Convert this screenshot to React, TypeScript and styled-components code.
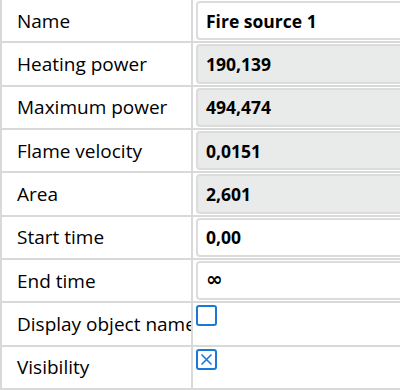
import React from "react";
import styled, { createGlobalStyle } from "styled-components";

const Global = createGlobalStyle`
  html, body { margin: 0; padding: 0; background: #ffffff; }
  body { font-family: "Open Sans", Lato, sans-serif; color: #000; }
`;

const Table = styled.div`
  width: 400px;
  height: 390px;
  box-sizing: border-box;
  border-left: 2px solid #d9d9d9;
  display: grid;
  grid-template-rows: repeat(9, 1fr);
  overflow: hidden;
`;

const Row = styled.div`
  display: grid;
  grid-template-columns: 191px 1fr;
  border-bottom: 2px solid #d9d9d9;
  min-height: 0;
`;

const Label = styled.div`
  border-right: 2px solid #d9d9d9;
  padding-left: 15px;
  display: flex;
  align-items: center;
  font-size: 19px;
  white-space: nowrap;
  overflow: hidden;
`;

const Cell = styled.div`
  padding: 1px 0 1px 3px;
  display: flex;
  min-width: 0;
`;

const Field = styled.div<{ $readOnly?: boolean }>`
  flex: 1;
  margin-right: -12px;
  box-sizing: border-box;
  border: 2px solid #dcdcdc;
  border-radius: 4px;
  background: ${(p) => (p.$readOnly ? "#e9eaea" : "#ffffff")};
  display: flex;
  align-items: center;
  padding-left: 8px;
  font-size: 17.5px;
  font-weight: 700;
`;

const Infinity = styled.span`
  font-family: "DejaVu Sans", sans-serif;
  font-size: 20px;
  font-weight: 700;
  line-height: 1;
  margin-top: -3px;
`;

const Box = styled.div`
  width: 21px;
  height: 21px;
  box-sizing: border-box;
  border: 2px solid #1a78d6;
  border-radius: 3px;
  margin-top: 1px;
  display: flex;
  align-items: center;
  justify-content: center;
`;

type Item =
  | { label: string; kind: "text"; value: string; readOnly?: boolean }
  | { label: string; kind: "check"; checked: boolean };

const items: Item[] = [
  { label: "Name", kind: "text", value: "Fire source 1" },
  { label: "Heating power", kind: "text", value: "190,139", readOnly: true },
  { label: "Maximum power", kind: "text", value: "494,474", readOnly: true },
  { label: "Flame velocity", kind: "text", value: "0,0151", readOnly: true },
  { label: "Area", kind: "text", value: "2,601", readOnly: true },
  { label: "Start time", kind: "text", value: "0,00" },
  { label: "End time", kind: "text", value: "∞" },
  { label: "Display object name", kind: "check", checked: false },
  { label: "Visibility", kind: "check", checked: true },
];

export default function App() {
  return (
    <>
      <Global />
      <Table>
        {items.map((it) => (
          <Row key={it.label}>
            <Label>{it.label}</Label>
            <Cell>
              {it.kind === "text" ? (
                <Field $readOnly={it.readOnly}>
                  {it.value === "∞" ? <Infinity>∞</Infinity> : it.value}
                </Field>
              ) : (
                <Box>
                  {it.checked && (
                    <svg width="13" height="13" viewBox="0 0 13 13">
                      <path d="M1.5 1.5 L11.5 11.5 M11.5 1.5 L1.5 11.5" stroke="#1a78d6" strokeWidth="1.6" fill="none" />
                    </svg>
                  )}
                </Box>
              )}
            </Cell>
          </Row>
        ))}
      </Table>
    </>
  );
}
